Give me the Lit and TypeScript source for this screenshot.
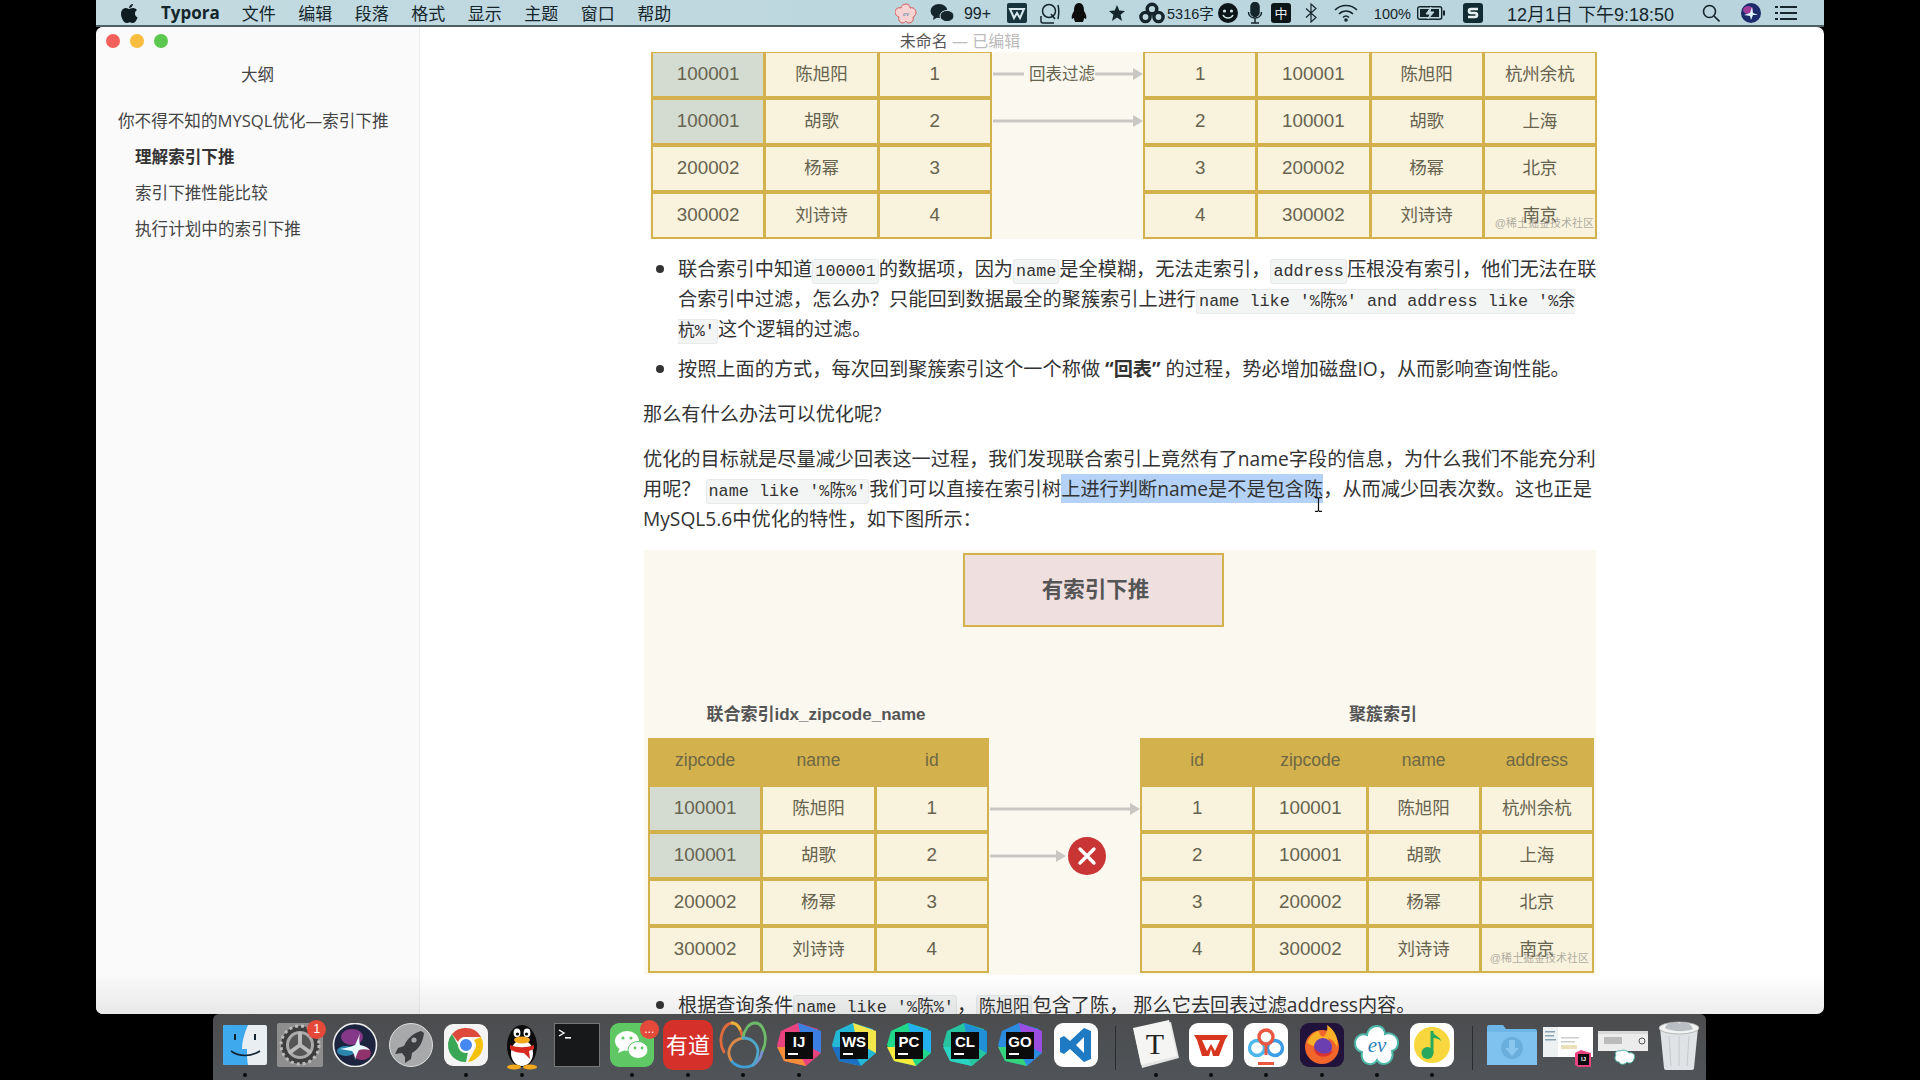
import { LitElement, html, css, nothing } from "lit";
import { customElement } from "lit/decorators.js";

const MENUS = ["文件", "编辑", "段落", "格式", "显示", "主题", "窗口", "帮助"];

const ROWS = [
  ["100001", "陈旭阳", "1", "杭州余杭"],
  ["100001", "胡歌", "2", "上海"],
  ["200002", "杨幂", "3", "北京"],
  ["300002", "刘诗诗", "4", "南京"],
];

const arrow = (w: number) => html`<svg class="arrow" width=${w} height="12" viewBox="0 0 ${w} 12">
  <rect x="0" y="4.5" width=${w - 8} height="3" fill="#c9c7c1"></rect>
  <polygon points="${w - 10},0 ${w},6 ${w - 10},12" fill="#c9c7c1"></polygon>
</svg>`;

const jb = (label: string, a: string, b: string, c: string) => html`<svg width="46" height="44" viewBox="0 0 46 44">
  <polygon points="5,8 22,0 42,6 45,30 30,43 8,38 1,22" fill=${a}></polygon>
  <polygon points="22,0 45,8 45,30 26,20" fill=${b}></polygon>
  <polygon points="1,24 8,38 30,43 20,24" fill=${c}></polygon>
  <rect x="9" y="9" width="28" height="27" fill="#0b0b0b"></rect>
  <text x="23" y="24" text-anchor="middle" font-family="Liberation Sans" font-weight="700" font-size="15" fill="#fff">${label}</text>
  <rect x="12" y="30" width="10" height="2" fill="#fff"></rect>
</svg>`;

const evFlower = (s: number) => html`<svg width=${s} height=${s} viewBox="0 0 46 44">
  <path d="M23 3c6 0 8 5 8 8 5-2 13 1 13 9 0 5-3 7-6 8 2 5-1 13-8 13-4 0-6-2-7-4-2 3-4 5-8 4-7-1-8-8-7-12-4-1-7-4-7-9 0-7 7-10 12-8 0-4 4-9 10-9z" fill="#fff" stroke="#4bb7a8" stroke-width="2"></path>
  <text x="23" y="29" text-anchor="middle" font-family="Liberation Serif" font-style="italic" font-size="21" fill="#2c7fb8">ev</text>
</svg>`;

const DOCK: { icon: unknown; dot?: boolean; badge?: string }[] = [
  {
    dot: true,
    icon: html`<svg width="46" height="44" viewBox="0 0 46 44">
      <rect x="1" y="2" width="44" height="40" rx="2" fill="#e9eef3"></rect>
      <path d="M3 2h23c-4 9-6 17-6 24h5c0 6 0 11 1 16H3a2 2 0 0 1-2-2V4a2 2 0 0 1 2-2z" fill="#3fa9ee"></path>
      <rect x="12" y="11" width="2" height="6" fill="#123"></rect>
      <rect x="32" y="11" width="2" height="6" fill="#123"></rect>
      <path d="M9 28c8 6 20 6 29 0" fill="none" stroke="#123" stroke-width="1.6"></path>
    </svg>`,
  },
  {
    badge: "1",
    icon: html`<svg width="46" height="44" viewBox="0 0 46 44">
      <rect x="0" y="0" width="46" height="44" rx="2" fill="#8e8e8e"></rect>
      <circle cx="23" cy="22" r="19" fill="#3d3d3d"></circle>
      <circle cx="23" cy="22" r="19" fill="none" stroke="#bbb" stroke-width="3" stroke-dasharray="3 3"></circle>
      <circle cx="23" cy="22" r="14" fill="#a9a9a9"></circle>
      <circle cx="23" cy="22" r="11" fill="#555"></circle>
      <path d="M23 22V9M23 22l-11 8M23 22l11 8" stroke="#b9b9b9" stroke-width="4"></path>
    </svg>`,
  },
  {
    icon: html`<svg width="46" height="44" viewBox="0 0 46 44">
      <circle cx="23" cy="22" r="21.5" fill="#1c2440" stroke="#eee" stroke-width="1.6"></circle>
      <ellipse cx="20" cy="14" rx="11" ry="8" fill="#a03c9a" opacity=".8"></ellipse>
      <ellipse cx="30" cy="30" rx="9" ry="7" fill="#c33a80" opacity=".7"></ellipse>
      <ellipse cx="14" cy="28" rx="9" ry="5" fill="#2f9fc9" opacity=".8"></ellipse>
      <path d="M8 26c8-1 12-3 15-4 3-6 4-9 5-12-1 5-1 9 0 12 4 1 7 2 10 5-4-1-8-1-11 0-2 3-3 7-4 10 0-4-1-7-3-9-4-1-8-1-12-2z" fill="#e8fbff"></path>
    </svg>`,
  },
  {
    icon: html`<svg width="46" height="44" viewBox="0 0 46 44">
      <circle cx="23" cy="22" r="21.5" fill="#a8a9aa" stroke="#ddd" stroke-width="1"></circle>
      <path d="M33 8c-8 2-14 8-17 15l-6 2-3 6 7-1 3 4 0 6 6-4 1-6c7-4 11-11 12-20z" fill="#3b3d40"></path>
      <circle cx="26" cy="17" r="2.6" fill="#a8a9aa"></circle>
    </svg>`,
  },
  {
    dot: true,
    icon: html`<svg width="46" height="44" viewBox="0 0 46 44">
      <rect x="1" y="1" width="44" height="42" rx="9" fill="#f4f4f4"></rect>
      <path d="M23 5a17 17 0 0 1 15 9H23a8 8 0 0 0-8 5L9 11a17 17 0 0 1 14-6z" fill="#dd4a3b"></path>
      <path d="M38 14a17 17 0 0 1-13 25l7-13a8 8 0 0 0-1-9z" fill="#f4c20d"></path>
      <path d="M9 11l7 13a8 8 0 0 0 9 5l-2 10A17 17 0 0 1 9 11z" fill="#3aa757"></path>
      <circle cx="23" cy="22" r="7" fill="#4688f1" stroke="#fff" stroke-width="2"></circle>
    </svg>`,
  },
  {
    dot: true,
    icon: html`<svg width="46" height="50" viewBox="0 0 46 50">
      <ellipse cx="23" cy="26" rx="15" ry="21" fill="#0c0c0c"></ellipse>
      <ellipse cx="23" cy="33" rx="11" ry="13" fill="#fff"></ellipse>
      <ellipse cx="18" cy="13" rx="3.4" ry="4.4" fill="#fff"></ellipse>
      <ellipse cx="28" cy="13" rx="3.4" ry="4.4" fill="#fff"></ellipse>
      <circle cx="18.5" cy="14" r="1.6" fill="#000"></circle>
      <circle cx="27.5" cy="14" r="1.6" fill="#000"></circle>
      <ellipse cx="23" cy="20" rx="8" ry="3.4" fill="#f3a81d"></ellipse>
      <path d="M11 25c8 3 16 3 24 0v4l-5 2 1 8-6-6c-5 0-10-1-14-4z" fill="#d92a1f"></path>
      <ellipse cx="15" cy="47" rx="7" ry="2.6" fill="#f3a81d"></ellipse>
      <ellipse cx="31" cy="47" rx="7" ry="2.6" fill="#f3a81d"></ellipse>
    </svg>`,
  },
  {
    icon: html`<svg width="46" height="44" viewBox="0 0 46 44">
      <rect x="0.5" y="0.5" width="45" height="43" fill="#16181a" stroke="#777"></rect>
      <path d="M5 7l5 3-5 3" fill="none" stroke="#fff" stroke-width="1.4"></path>
      <rect x="11" y="14" width="6" height="1.6" fill="#fff"></rect>
    </svg>`,
  },
  {
    dot: true,
    badge: "...",
    icon: html`<svg width="46" height="44" viewBox="0 0 46 44">
      <rect x="1" y="0" width="44" height="44" rx="9" fill="#5fc865"></rect>
      <ellipse cx="18" cy="18" rx="12" ry="10" fill="#fff"></ellipse>
      <path d="M11 24l-2 6 7-3z" fill="#fff"></path>
      <ellipse cx="29" cy="27" rx="10" ry="8.5" fill="#fff" stroke="#5fc865"></ellipse>
      <circle cx="14" cy="15" r="1.6" fill="#5fc865"></circle>
      <circle cx="22" cy="15" r="1.6" fill="#5fc865"></circle>
      <circle cx="26" cy="25" r="1.4" fill="#5fc865"></circle>
      <circle cx="33" cy="25" r="1.4" fill="#5fc865"></circle>
    </svg>`,
  },
  {
    dot: true,
    icon: html`<svg width="50" height="50" viewBox="0 0 50 50">
      <rect x="0" y="0" width="50" height="50" rx="10" fill="#d6302a"></rect>
      <text x="25" y="33" text-anchor="middle" font-family="Noto Sans CJK SC" font-size="22" fill="#fff">有道</text>
    </svg>`,
  },
  {
    dot: true,
    icon: html`<svg width="50" height="50" viewBox="0 0 50 50" fill="none" stroke-width="2.8" stroke-linecap="round">
      <path d="M6 32C-1 20 5 4 14 3c6 0 9 7 11 15" stroke="#df6a3c"></path>
      <path d="M25 18c1-8 6-15 12-15 9 0 14 16 7 29" stroke="#6dba6a"></path>
      <path d="M14 3c4 0 6 2 8 6" stroke="#e8b23c"></path>
      <path d="M44 32c-1 5-4 10-9 13" stroke="#7a8fd0"></path>
      <path d="M35 45c-8 4-18 2-22-5" stroke="#3f9fd8"></path>
      <path d="M13 40c-5-8-1-20 12-22" stroke="#d98a4a"></path>
      <path d="M25 18c9 0 14 6 15 12 0 6-2 11-5 15" stroke="#4fa7c9"></path>
    </svg>`,
  },
  { dot: true, icon: jb("IJ", "#e8437f", "#3b7fe0", "#f58e3b") },
  { icon: jb("WS", "#23b9d6", "#f4e64a", "#1d6fc4") },
  { icon: jb("PC", "#21d789", "#22b0ee", "#f6ea3c") },
  { icon: jb("CL", "#27c4a0", "#1f8fd8", "#2ad4c2") },
  { icon: jb("GO", "#2a8be0", "#9a4de0", "#35d47c") },
  {
    icon: html`<svg width="46" height="44" viewBox="0 0 46 44">
      <rect x="1" y="0" width="44" height="44" rx="9" fill="#fdfdfd"></rect>
      <path d="M31 5l7 3v28l-7 3-14-13-6 5-4-2V15l4-2 6 5zM31 14l-8 8 8 8z" fill="#1f7ac4"></path>
    </svg>`,
  },
  { icon: "sep" },
  {
    dot: true,
    icon: html`<svg width="50" height="50" viewBox="0 0 50 50">
      <polygon points="3,11 40,2 48,38 11,48" fill="#e4e4e4"></polygon>
      <polygon points="2,8 38,0 46,36 10,45" fill="#f5f5f3"></polygon>
      <text x="24" y="34" text-anchor="middle" font-family="Liberation Serif" font-size="30" fill="#222">T</text>
    </svg>`,
  },
  {
    dot: true,
    icon: html`<svg width="46" height="44" viewBox="0 0 46 44">
      <rect x="1" y="0" width="44" height="44" rx="9" fill="#fff"></rect>
      <path d="M6 12h34l-3 5-6 16h-6l-2-7-2 7h-7L9 17z" fill="#d9361f"></path>
      <path d="M14 17h18l-5 11-4-7-4 7z" fill="#fff"></path>
    </svg>`,
  },
  {
    dot: true,
    icon: html`<svg width="46" height="44" viewBox="0 0 46 44" fill="none">
      <rect x="1" y="0" width="44" height="44" rx="9" fill="#fff"></rect>
      <circle cx="14" cy="25" r="7.5" stroke="#4cb7ec" stroke-width="3.4"></circle>
      <circle cx="32" cy="25" r="7.5" stroke="#3a9be6" stroke-width="3.4"></circle>
      <circle cx="23" cy="14" r="7" stroke="#e8573f" stroke-width="3.4"></circle>
      <path d="M23 21v11" stroke="#e8573f" stroke-width="3"></path>
      <rect x="15" y="39" width="16" height="3" fill="#e8573f"></rect>
    </svg>`,
  },
  {
    dot: true,
    icon: html`<svg width="46" height="44" viewBox="0 0 46 44">
      <rect x="1" y="0" width="44" height="44" rx="9" fill="#20123a"></rect>
      <circle cx="23" cy="24" r="17" fill="#f2662c"></circle>
      <path d="M8 20c3-8 9-12 12-12 0 3 2 5 4 6 4-3 5-8 4-12 8 5 12 14 10 22-2-5-5-8-9-9 3 5-1 10-6 10-6 0-10-3-15-5z" fill="#fbb028"></path>
      <circle cx="24" cy="24" r="9" fill="#6b3fb0"></circle>
      <path d="M15 24c3 7 13 9 19 3-2 9-19 10-19-3z" fill="#d8332f"></path>
    </svg>`,
  },
  { dot: true, icon: evFlower(46) },
  {
    dot: true,
    icon: html`<svg width="46" height="44" viewBox="0 0 46 44">
      <rect x="1" y="0" width="44" height="44" rx="9" fill="#fff"></rect>
      <circle cx="23" cy="22" r="18" fill="#f7d63e"></circle>
      <path d="M23 8v22" stroke="#27a85f" stroke-width="3"></path>
      <circle cx="18.5" cy="30" r="6" fill="#27a85f"></circle>
      <path d="M23 8c2 5 8 5 9 10-3-3-6-3-9-3z" fill="#27a85f"></path>
    </svg>`,
  },
  { icon: "sep" },
  {
    icon: html`<svg width="50" height="44" viewBox="0 0 50 44">
      <path d="M0 4a2 2 0 0 1 2-2h14l3 4h29a2 2 0 0 1 2 2v34H0z" fill="#6fb6e8"></path>
      <rect x="0" y="9" width="50" height="33" fill="#80c2ef"></rect>
      <circle cx="25" cy="25" r="11" fill="#6aaedd"></circle>
      <path d="M22 17h6v8h4l-7 8-7-8h4z" fill="#88c6ef"></path>
    </svg>`,
  },
  {
    icon: html`<svg width="50" height="44" viewBox="0 0 50 44">
      <rect x="0" y="4" width="50" height="30" fill="#fff"></rect>
      <rect x="0" y="4" width="15" height="30" fill="#eef1f2"></rect>
      <rect x="2" y="8" width="10" height="1.5" fill="#8aa3b0"></rect>
      <rect x="2" y="12" width="9" height="1.5" fill="#8aa3b0"></rect>
      <rect x="2" y="16" width="11" height="1.5" fill="#8aa3b0"></rect>
      <rect x="18" y="14" width="18" height="1.5" fill="#ccc"></rect>
      <rect x="18" y="18" width="14" height="1.5" fill="#ccc"></rect>
      <rect x="18" y="22" width="16" height="4" fill="#eadfb8"></rect>
      <polygon points="32,30 38,27 48,30 48,44 38,46 32,42" fill="#e8437f"></polygon>
      <rect x="35" y="31" width="11" height="11" fill="#0b0b0b"></rect>
      <text x="40.500" y="38" text-anchor="middle" font-family="Liberation Sans" font-weight="700" font-size="6" fill="#fff">IJ</text>
    </svg>`,
  },
  {
    icon: html`<svg width="50" height="44" viewBox="0 0 50 44">
      <rect x="0" y="8" width="50" height="20" fill="#ececec"></rect>
      <rect x="0" y="8" width="50" height="3" fill="#d8d8d8"></rect>
      <rect x="6" y="14" width="18" height="7" fill="#bbb"></rect>
      <circle cx="44" cy="18" r="3" fill="none" stroke="#555"></circle>
      <path d="M22 28c4-2 8 0 9 2 4-1 7 2 5 6-1 4-5 5-7 3-2 3-7 3-8 0-4 0-5-5-3-7-2-2 1-5 4-4z" fill="#fff" stroke="#4bb7a8"></path>
    </svg>`,
  },
  {
    icon: html`<svg width="44" height="50" viewBox="0 0 44 50">
      <path d="M3 8h38l-4 40a2 2 0 0 1-2 2H9a2 2 0 0 1-2-2z" fill="#dfe3e5"></path>
      <ellipse cx="22" cy="8" rx="20" ry="6" fill="#f2f3f3" stroke="#aaa" stroke-width=".8"></ellipse>
      <path d="M8 8c3-8 8-3 12-6 3 4 7-2 10 1 3 1 5 3 6 6-8 3-20 3-28-1z" fill="#b9bec2"></path>
      <path d="M12 16l2 30M22 16v30M32 16l-2 30" stroke="#c5cacd" stroke-width="1"></path>
    </svg>`,
  },
];

const STATUS: { ml: number; icon: unknown }[] = [
  {
    ml: 0,
    icon: html`<svg width="22" height="22" viewBox="0 0 22 22">
      <path d="M11 2c3 0 4 2 4 4 3-1 6 1 6 5 0 2-2 4-3 4 1 3-1 6-4 6-2 0-3-1-3-2-1 1-2 2-4 2-3-1-4-4-3-6-2-1-4-2-4-5 0-3 3-5 6-4 0-2 2-4 5-4z" fill="#f6d3d3" stroke="#d85a5a"></path>
      <text x="11" y="14" text-anchor="middle" font-size="7" font-style="italic" font-family="Liberation Serif" fill="#3a78a8">ev</text>
    </svg>`,
  },
  {
    ml: 13,
    icon: html`<svg width="24" height="20" viewBox="0 0 24 20" fill="#14262c">
      <ellipse cx="9" cy="8" rx="8.5" ry="7"></ellipse>
      <path d="M4 12l-1 5 5-3z"></path>
      <ellipse cx="17" cy="13" rx="7" ry="5.6" stroke="#bfd8df"></ellipse>
    </svg>`,
  },
  { ml: 10, icon: html`<span class="st t16">99+</span>` },
  {
    ml: 16,
    icon: html`<svg width="20" height="20" viewBox="0 0 20 20">
      <rect width="20" height="20" rx="2" fill="#17343d"></rect>
      <path d="M3 6h14l-4 9-3-5-3 5z" fill="none" stroke="#d6e8ec" stroke-width="2"></path>
    </svg>`,
  },
  {
    ml: 13,
    icon: html`<svg width="20" height="22" viewBox="0 0 20 22" fill="none" stroke="#14262c" stroke-width="1.5">
      <circle cx="9" cy="9" r="6.5"></circle>
      <path d="M11 12l4 5"></path>
      <path d="M1 14v5a2 2 0 0 0 2 2h11M18 3c1 4 1 9 0 14"></path>
    </svg>`,
  },
  {
    ml: 11,
    icon: html`<svg width="16" height="22" viewBox="0 0 16 22" fill="#0c0c0c">
      <path d="M8 1c4 0 5 4 5 8 2 3 3 6 2 8l-2-1c0 2-1 3-1 4h-8c0-1-1-2-1-4l-2 1c-1-2 0-5 2-8 0-4 1-8 5-8z"></path>
    </svg>`,
  },
  {
    ml: 22,
    icon: html`<svg width="16" height="16" viewBox="0 0 16 16" fill="#14262c">
      <polygon points="8,0 10.3,5.5 16,6 11.6,9.8 13,16 8,12.6 3,16 4.4,9.8 0,6 5.7,5.5"></polygon>
    </svg>`,
  },
  {
    ml: 14,
    icon: html`<svg width="26" height="22" viewBox="0 0 26 22" fill="none" stroke="#14262c" stroke-width="3.4">
      <circle cx="13" cy="7" r="4.8"></circle>
      <circle cx="6.5" cy="15" r="4.6"></circle>
      <circle cx="19.5" cy="15" r="4.6"></circle>
    </svg>`,
  },
  { ml: 2, icon: html`<span class="st t14">5316字</span>` },
  {
    ml: 4,
    icon: html`<svg width="20" height="20" viewBox="0 0 20 20">
      <circle cx="10" cy="10" r="10" fill="#0c1518"></circle>
      <circle cx="6.5" cy="8" r="1.6" fill="#cfe3e8"></circle>
      <circle cx="13.5" cy="8" r="1.6" fill="#cfe3e8"></circle>
      <path d="M5 12c2 4 8 4 10 0" fill="none" stroke="#cfe3e8" stroke-width="1.6"></path>
    </svg>`,
  },
  {
    ml: 9,
    icon: html`<svg width="16" height="22" viewBox="0 0 16 22" fill="none" stroke="#14262c" stroke-width="1.5">
      <rect x="4" y="0.5" width="8" height="14" rx="4" fill="#14262c"></rect>
      <path d="M1.5 10c0 8 13 8 13 0M8 16.500V21M4 21h8"></path>
    </svg>`,
  },
  {
    ml: 8,
    icon: html`<svg width="20" height="20" viewBox="0 0 20 20">
      <rect width="20" height="20" rx="3" fill="#0c1518"></rect>
      <text x="10" y="15" text-anchor="middle" font-family="Noto Sans CJK SC" font-size="13" fill="#e6f0f2">中</text>
    </svg>`,
  },
  {
    ml: 14,
    icon: html`<svg width="12" height="20" viewBox="0 0 12 20" fill="none" stroke="#14262c" stroke-width="1.2">
      <path d="M1 5.500l10 9L6 19V1l5 4.500-10 9"></path>
    </svg>`,
  },
  {
    ml: 17,
    icon: html`<svg width="24" height="18" viewBox="0 0 24 18" fill="none" stroke="#14262c" stroke-width="1.6">
      <path d="M1 6c6-6 16-6 22 0M5 10c4-4 10-4 14 0M9 13.500c2-2 4-2 6 0"></path>
      <circle cx="12" cy="16" r="1" fill="#14262c"></circle>
    </svg>`,
  },
  { ml: 16, icon: html`<span class="st t14">100%</span>` },
  {
    ml: 6,
    icon: html`<svg width="28" height="16" viewBox="0 0 28 16">
      <rect x="0.7" y="1.7" width="24" height="12.6" rx="2" fill="none" stroke="#14262c" stroke-width="1.4"></rect>
      <rect x="26" y="5.5" width="2" height="5" fill="#14262c"></rect>
      <rect x="3" y="4" width="19" height="8" fill="#14262c"></rect>
      <path d="M14 2l-5 7h4l-2 5 6-7h-4z" fill="#bfd8df" stroke="#bfd8df"></path>
    </svg>`,
  },
  {
    ml: 18,
    icon: html`<svg width="20" height="20" viewBox="0 0 20 20">
      <rect width="20" height="20" rx="3" fill="#122c33"></rect>
      <path d="M15 6H8a2 2 0 0 0 0 4h4a2 2 0 0 1 0 4H5" fill="none" stroke="#e6f0f2" stroke-width="2.6"></path>
    </svg>`,
  },
  { ml: 24, icon: html`<span class="st t18">12月1日 下午9:18:50</span>` },
  {
    ml: 28,
    icon: html`<svg width="18" height="18" viewBox="0 0 18 18" fill="none" stroke="#14262c" stroke-width="1.6">
      <circle cx="7.5" cy="7.5" r="6"></circle>
      <path d="M12 12l5.500 5.500"></path>
    </svg>`,
  },
  {
    ml: 21,
    icon: html`<svg width="20" height="20" viewBox="0 0 20 20">
      <circle cx="10" cy="10" r="10" fill="#1c2b6a"></circle>
      <ellipse cx="7" cy="7" rx="5" ry="4" fill="#a03c9a"></ellipse>
      <path d="M3 12l6-2 2-6 1 6 5 2-5 0-2 5-1-4z" fill="#dff6ff"></path>
    </svg>`,
  },
  {
    ml: 14,
    icon: html`<svg width="22" height="16" viewBox="0 0 22 16" fill="#14262c">
      <rect x="0" y="1" width="3" height="2"></rect><rect x="5" y="1" width="17" height="2"></rect>
      <rect x="0" y="7" width="3" height="2"></rect><rect x="5" y="7" width="17" height="2"></rect>
      <rect x="0" y="13" width="3" height="2"></rect><rect x="5" y="13" width="17" height="2"></rect>
    </svg>`,
  },
];

@customElement("app-root")
export class AppRoot extends LitElement {
  static styles = css`
    :host {
      display: block;
      width: 1920px;
      height: 1080px;
      overflow: hidden;
      background: #000;
      font-family: "Open Sans", "Noto Sans CJK SC", sans-serif;
      color: #333;
    }
    .screen {
      display: flex;
      flex-direction: column;
      height: 1080px;
      padding: 0 96px;
      box-sizing: border-box;
    }

    /* menu bar */
    .menubar {
      display: flex;
      align-items: center;
      height: 27px;
      flex: none;
      box-sizing: border-box;
      background: linear-gradient(90deg, #c2dae0, #bdd7df 50%, #b9d4dc);
      border-bottom: 2px solid #4d5f65;
      padding-right: 27px;
      color: #14262c;
      font-size: 17px;
      white-space: nowrap;
    }
    .apple {
      margin-left: 24px;
      width: 18px;
      height: 20px;
    }
    .appname {
      margin-left: 23px;
      margin-right: 22px;
      font-family: "Open Sans", sans-serif;
      font-weight: 700;
      font-size: 17px;
    }
    .menus {
      display: flex;
      gap: 22.5px;
    }
    .status {
      display: flex;
      align-items: center;
      margin-left: auto;
    }
    .status svg {
      display: block;
      flex: none;
    }
    .st {
      font-family: "Liberation Sans", "Noto Sans CJK SC", sans-serif;
    }
    .t14 {
      font-size: 14.5px;
    }
    .t16 {
      font-size: 16px;
    }
    .t18 {
      font-size: 18px;
    }

    /* window */
    .window {
      position: relative;
      display: flex;
      height: 987px;
      flex: none;
      background: #fff;
      border-radius: 7px;
      overflow: hidden;
    }
    .lights {
      position: absolute;
      left: 10px;
      top: 6.5px;
      display: flex;
      gap: 10px;
    }
    .lights i {
      width: 14px;
      height: 14px;
      border-radius: 50%;
    }
    .red {
      background: #f4615c;
    }
    .amber {
      background: #f8bd3e;
    }
    .green {
      background: #5cc84f;
    }
    .title {
      position: absolute;
      top: 2px;
      left: 0;
      right: 0;
      text-align: center;
      font-size: 16px;
      line-height: 24px;
      color: #555;
    }
    .title span {
      color: #bbb;
    }
    .side {
      width: 323px;
      flex: none;
      background: #fafafa;
      border-right: 1px solid #ececec;
      font-size: 16.6px;
      line-height: 36px;
      color: #444;
    }
    .side h4 {
      margin: 30px 0 10px;
      font-weight: 400;
      font-size: 16.6px;
      line-height: 36px;
      text-align: center;
    }
    .side div {
      padding-left: 39px;
    }
    .side .top {
      padding-left: 22px;
      white-space: nowrap;
    }
    .side .cur {
      font-weight: 700;
      color: #333;
    }
    .main {
      flex: 1;
      padding: 25px 0 0 223px;
      font-size: 19.2px;
      line-height: 30px;
      color: #333;
      min-width: 0;
    }
    .doc {
      width: 960px;
    }
    ul {
      margin: 15px 0;
      padding-left: 35px;
      list-style: none;
    }
    li {
      position: relative;
      margin-bottom: 10px;
    }
    li:last-child {
      margin-bottom: 0;
    }
    li::before {
      content: "";
      position: absolute;
      left: -22px;
      top: 11px;
      width: 8px;
      height: 8px;
      border-radius: 50%;
      background: #333;
    }
    p {
      margin: 15px 0;
    }
    code {
      font-family: "Liberation Mono", "Noto Sans CJK SC", monospace;
      font-size: 16.8px;
      line-height: 16px;
      background: #f3f4f4;
      border: 1px solid #e7eaed;
      border-radius: 3px;
      padding: 2px 2px;
    }
    .sel {
      background: #b4d2f7;
      padding: 1px 0;
    }
    .fade {
      position: absolute;
      left: 0;
      right: 0;
      bottom: 0;
      height: 40px;
      background: linear-gradient(rgba(0, 0, 0, 0), rgba(0, 0, 0, 0.07));
      pointer-events: none;
    }
    .ibeam {
      position: absolute;
      left: 1218px;
      top: 470px;
    }

    /* figures */
    .fig {
      position: relative;
      background: #faf8ef;
      font-family: "Liberation Sans", "Noto Sans CJK SC", sans-serif;
      color: #66634f;
      font-size: 17.5px;
      line-height: 24px;
    }
    .fig-a {
      width: 947px;
      margin-left: 7px;
      height: 187px;
    }
    .fig-a .pair {
      padding-left: 1px;
    }
    .fig-b {
      width: 952px;
      margin: 16px 0 0 1px;
      height: 425px;
      padding-top: 3px;
      box-sizing: border-box;
    }
    .pair {
      display: flex;
    }
    .fig-b .pair {
      margin-left: 4px;
    }
    .tbl {
      display: grid;
      gap: 4px 3px;
      background: #d3b24d;
      padding: 1px 2px 2px;
      grid-auto-rows: 43px;
      box-sizing: border-box;
      flex: none;
    }
    .tbl.three {
      width: 341px;
      grid-template-columns: repeat(3, 1fr);
    }
    .tbl.four {
      width: 454px;
      grid-template-columns: repeat(4, 1fr);
    }
    .tbl.headed {
      padding-top: 0;
      grid-template-rows: 45px;
    }
    .cell {
      display: flex;
      align-items: center;
      justify-content: center;
      padding-bottom: 2px;
      box-sizing: border-box;
      background: #f9f2dc;
    }
    .cell.num {
      font-size: 18.8px;
    }
    .cell.hit {
      background: #d4dcd2;
    }
    .cell.head {
      background: transparent;
      color: #6e6745;
    }
    .links {
      width: 151px;
      flex: none;
      display: grid;
      grid-auto-rows: 43px;
      row-gap: 4px;
      align-items: center;
      align-content: start;
      box-sizing: border-box;
    }
    .links.headed {
      padding-top: 49px;
    }
    .link {
      position: relative;
      display: flex;
      align-items: center;
      gap: 2px;
      padding-left: 1px;
    }
    .arrow {
      display: block;
      flex: none;
    }
    .link b {
      position: absolute;
      left: 32px;
      top: -6px;
      font-weight: 400;
      font-size: 16.5px;
      background: #faf8ef;
      padding: 0 0 0 5px;
      line-height: 24px;
      white-space: nowrap;
    }
    .deny {
      width: 38px;
      height: 38px;
      flex: none;
      display: block;
    }
    .mark {
      position: absolute;
      right: 3px;
      font-size: 11px;
      line-height: 14px;
      color: rgba(110, 110, 110, 0.55);
      white-space: nowrap;
    }
    .fig-a .mark {
      bottom: 9px;
    }
    .fig-b .mark {
      bottom: 10px;
      right: 7px;
    }
    .pink {
      width: 261px;
      height: 74px;
      margin-left: 319px;
      padding-left: 4px;
      box-sizing: border-box;
      background: #f0dfdf;
      border: 2px solid #d3b24d;
      display: flex;
      align-items: center;
      justify-content: center;
      font-weight: 700;
      font-size: 21.5px;
      color: #555;
    }
    .labels {
      display: flex;
      margin: 78px 0 13px;
      line-height: 20px;
      font-weight: 700;
      font-size: 17px;
      color: #555;
    }
    .labels span:first-child {
      width: 344px;
      text-align: center;
    }
    .labels span:last-child {
      margin-left: 361px;
    }

    /* dock */
    .dock {
      position: relative;
      display: flex;
      align-items: flex-start;
      flex: none;
      width: 1493px;
      height: 66px;
      margin-left: 117px;
      padding: 0 0 0 4px;
      box-sizing: border-box;
      background: linear-gradient(#4b4c4e, #505458);
      border-radius: 6px 6px 0 0;
    }
    .slot {
      position: relative;
      width: 55.4px;
      height: 66px;
      flex: none;
    }
    .slot svg {
      display: block;
      position: absolute;
      left: 50%;
      top: 31px;
      transform: translate(-50%, -50%);
    }
    .dot {
      position: absolute;
      left: 50%;
      top: 59px;
      width: 4px;
      height: 4px;
      margin-left: -2px;
      border-radius: 50%;
      background: #0a0a0a;
    }
    .badge {
      position: absolute;
      left: 35px;
      top: 6px;
      width: 19px;
      height: 19px;
      border-radius: 50%;
      background: #e5493a;
      color: #fff;
      font-family: "Liberation Sans", sans-serif;
      font-size: 12px;
      line-height: 18px;
      text-align: center;
    }
    .sep {
      position: relative;
      width: 24.6px;
      flex: none;
      height: 66px;
    }
    .sep::after {
      content: "";
      position: absolute;
      left: 12px;
      top: 12px;
      width: 1px;
      height: 44px;
      background: #2c2d2f;
    }
  `;

  private table(cols: number[], head: string[] | null, hits: boolean) {
    return html`<div class="tbl ${cols.length === 3 ? "three" : "four"} ${head ? "headed" : ""}">
      ${head ? head.map((h) => html`<div class="cell head">${h}</div>`) : nothing}
      ${ROWS.map((row, r) =>
        cols.map((c, i) => {
          const isNum = /^\d+$/.test(row[c]);
          return html`<div class="cell ${isNum ? "num" : ""} ${hits && i === 0 && r < 2 ? "hit" : ""}">${row[c]}</div>`;
        })
      )}
    </div>`;
  }

  render() {
    return html`<div class="screen">
      <div class="menubar">
        <svg class="apple" viewBox="0 0 18 20" fill="#0f1d22">
          <path d="M13 1c0 2-2 4-4 4 0-2 2-4 4-4zM9 6c1 0 2-1 4-1 1.600 0 3 .8 4 2-3 2-2.500 6 .6 7.500-1 2.500-2.500 5.500-4.600 5.500-1.200 0-1.800-.8-3.200-.8s-2.200.8-3.300.8C4 20 1 15 1 11c0-4 2.500-6 5-6 1.200 0 2.200 1 3 1z"></path>
        </svg>
        <span class="appname">Typora</span>
        <div class="menus">${MENUS.map((m) => html`<span>${m}</span>`)}</div>
        <div class="status">
          ${STATUS.map((s) => html`<div style="margin-left:${s.ml}px">${s.icon}</div>`)}
        </div>
      </div>

      <div class="window">
        <aside class="side">
          <h4>大纲</h4>
          <div class="top">你不得不知的MYSQL优化—索引下推</div>
          <div class="cur">理解索引下推</div>
          <div>索引下推性能比较</div>
          <div>执行计划中的索引下推</div>
        </aside>

        <main class="main">
          <div class="doc">
            <div class="fig fig-a">
              <div class="pair">
                ${this.table([0, 1, 2], null, true)}
                <div class="links">
                  <div class="link">${arrow(150)}<b>回表过滤</b></div>
                  <div class="link">${arrow(150)}</div>
                </div>
                ${this.table([2, 0, 1, 3], null, false)}
              </div>
              <span class="mark">@稀土掘金技术社区</span>
            </div>

            <ul>
              <li>联合索引中知道<code>100001</code>的数据项，因为<code>name</code>是全模糊，无法走索引，<code>address</code>压根没有索引，他们无法在联合索引中过滤，怎么办？只能回到数据最全的聚簇索引上进行<code>name like '%陈%' and address like '%余杭%'</code>这个逻辑的过滤。</li>
              <li>按照上面的方式，每次回到聚簇索引这个一个称做 <strong>“回表”</strong> 的过程，势必增加磁盘IO，从而影响查询性能。</li>
            </ul>
            <p>那么有什么办法可以优化呢?</p>
            <p>优化的目标就是尽量减少回表这一过程，我们发现联合索引上竟然有了name字段的信息，为什么我们不能充分利用呢？ <code>name like '%陈%'</code>我们可以直接在索引树<span class="sel">上进行判断name是不是包含陈</span>，从而减少回表次数。这也正是MySQL5.6中优化的特性，如下图所示：</p>

            <div class="fig fig-b">
              <div class="pink">有索引下推</div>
              <div class="labels"><span>联合索引idx_zipcode_name</span><span>聚簇索引</span></div>
              <div class="pair">
                ${this.table([0, 1, 2], ["zipcode", "name", "id"], true)}
                <div class="links headed">
                  <div class="link">${arrow(150)}</div>
                  <div class="link">
                    ${arrow(76)}
                    <svg class="deny" viewBox="0 0 38 38">
                      <circle cx="19" cy="19" r="19" fill="#c93434"></circle>
                      <path d="M12 12l14 14M26 12L12 26" stroke="#fff" stroke-width="3.4" stroke-linecap="round"></path>
                    </svg>
                  </div>
                </div>
                ${this.table([2, 0, 1, 3], ["id", "zipcode", "name", "address"], false)}
              </div>
              <span class="mark">@稀土掘金技术社区</span>
            </div>

            <ul>
              <li>根据查询条件<code>name like '%陈%'</code>，<code>陈旭阳</code>包含了陈， 那么它去回表过滤address内容。</li>
            </ul>
          </div>
        </main>

        <div class="lights"><i class="red"></i><i class="amber"></i><i class="green"></i></div>
        <div class="title">未命名 <span>— 已编辑</span></div>
        <svg class="ibeam" width="9" height="15" viewBox="0 0 9 15" fill="none" stroke="#111" stroke-width="1.2">
          <path d="M1 .6h2.500l1 1 1-1H8M4.500 1.500v12M1 14.400h2.500l1-1 1 1H8"></path>
        </svg>
        <div class="fade"></div>
      </div>

      <div class="dock">
        ${DOCK.map((d) =>
          d.icon === "sep"
            ? html`<div class="sep"></div>`
            : html`<div class="slot">
                ${d.icon}
                ${d.badge ? html`<span class="badge">${d.badge}</span>` : nothing}
                ${d.dot ? html`<span class="dot"></span>` : nothing}
              </div>`
        )}
      </div>
    </div>`;
  }
}
